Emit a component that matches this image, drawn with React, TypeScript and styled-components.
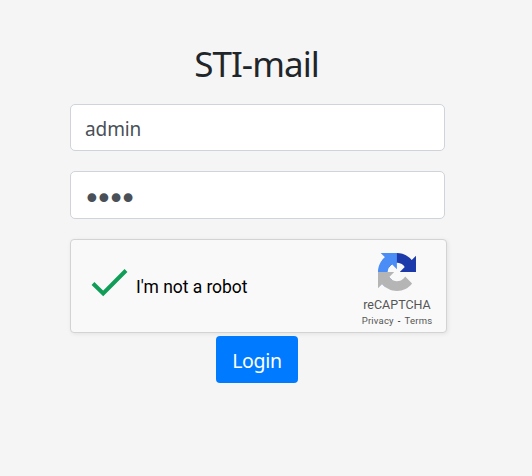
import React from "react";
import styled, { createGlobalStyle } from "styled-components";

const GlobalStyle = createGlobalStyle`
  * { box-sizing: border-box; }
  body {
    margin: 0;
    background: #f5f5f5;
    font-family: "Noto Sans", "Open Sans", sans-serif;
    color: #212529;
  }
`;

const Form = styled.form`
  display: flex;
  flex-direction: column;
  width: 377px;
  margin-left: 70px;
  padding-top: 41px;
`;

const Title = styled.h1`
  width: 373px;
  height: 46px;
  margin: 0 0 17px;
  text-align: center;
  font-size: 35px;
  line-height: 46px;
  font-weight: 400;
  letter-spacing: -0.95px;
`;

const Field = styled.input<{ $height: number }>`
  width: 375px;
  height: ${(p) => p.$height}px;
  margin: 0 0 20px;
  padding: 2px 14px 0;
  border: 1px solid #ced4da;
  border-radius: 5px;
  background: #fff;
  color: #495057;
  outline: none;
  font-family: inherit;
  font-size: 19px;
  letter-spacing: -0.1px;
`;

const PasswordField = styled(Field)`
  padding: 6px 12px 0;
  font-family: "DejaVu Sans", sans-serif;
  font-size: 30px;
  letter-spacing: -5.6px;
`;

const Captcha = styled.div`
  display: flex;
  align-items: center;
  width: 377px;
  height: 94px;
  border: 1px solid #d3d3d3;
  border-radius: 4px;
  background: #f9f9f9;
  box-shadow: 1px 1px 4px rgba(0, 0, 0, 0.08);
  font-family: Roboto, sans-serif;
`;

const CheckMark = styled.svg`
  width: 38px;
  height: 30px;
  margin: -9px 0 0 20px;
`;

const CaptchaLabel = styled.span`
  flex: 1;
  margin: 2px 0 0 7px;
  color: #000;
  font-size: 17.5px;
  letter-spacing: -0.05px;
`;

const Brand = styled.div`
  display: flex;
  flex-direction: column;
  align-items: center;
  align-self: flex-start;
  width: 80px;
  margin: 13px 9px 0 0;
  color: #555;
`;

const Logo = styled.svg`
  width: 38px;
  height: 38px;
`;

const BrandName = styled.span`
  margin-top: 6px;
  font-size: 12.5px;
  line-height: 16px;
`;

const Links = styled.span`
  display: flex;
  gap: 4px;
  margin-top: 2px;
  font-size: 9.5px;
  line-height: 12px;
  letter-spacing: 0.2px;
  white-space: nowrap;
`;

const Dash = styled.span`
  color: #000;
`;

const LoginButton = styled.button`
  align-self: flex-start;
  width: 82px;
  height: 47px;
  margin: 3px 0 0 146px;
  padding: 2px 0 0;
  border: 0;
  border-radius: 4px;
  background: #007bff;
  color: #fff;
  font-family: inherit;
  font-size: 19.5px;
  letter-spacing: -0.3px;
`;

export default function App() {
  return (
    <>
      <GlobalStyle />
      <Form onSubmit={(e) => e.preventDefault()}>
        <Title>STI-mail</Title>
        <Field $height={47} type="text" defaultValue="admin" aria-label="Username" />
        <PasswordField $height={48} type="password" defaultValue="pass" aria-label="Password" />
        <Captcha>
          <CheckMark viewBox="0 0 38 30" aria-hidden="true">
            <path d="M2 16.5 12.2 26.5 35 3.5" fill="none" stroke="#0f9d58" strokeWidth="4" />
          </CheckMark>
          <CaptchaLabel>I'm not a robot</CaptchaLabel>
          <Brand>
            <Logo viewBox="0 0 64 64" aria-hidden="true">
              <path fill="#1c3aa9" d="M64 31.955l-.033-1.37V4.687l-7.16 7.16C50.948 4.674 42.033.093 32.05.093c-10.4 0-19.622 4.96-25.458 12.64l11.736 11.86a15.55 15.55 0 0 1 4.754-5.334c2.05-1.6 4.952-2.906 8.968-2.906.485 0 .86.057 1.135.163 4.976.393 9.288 3.14 11.828 7.124l-8.307 8.307L64 31.953" />
              <path fill="#4a8df6" d="M31.862.094l-1.37.033H4.594l7.16 7.16C4.58 13.147 0 22.06 0 32.046c0 10.4 4.96 19.622 12.64 25.458L24.5 45.768a15.55 15.55 0 0 1-5.334-4.754c-1.6-2.05-2.906-4.952-2.906-8.968 0-.485.057-.86.163-1.135.393-4.976 3.14-9.288 7.124-11.828l8.307 8.307L31.86.095" />
              <path fill="#b5b5b5" d="M.001 32.045l.033 1.37v25.898l7.16-7.16c5.86 7.173 14.774 11.754 24.76 11.754 10.4 0 19.622-4.96 25.458-12.64l-11.736-11.86a15.55 15.55 0 0 1-4.754 5.334c-2.05 1.6-4.952 2.906-8.968 2.906-.485 0-.86-.057-1.135-.163-4.976-.393-9.288-3.14-11.828-7.124l8.307-8.307c-10.522.04-22.4.066-27.295-.005" />
            </Logo>
            <BrandName>reCAPTCHA</BrandName>
            <Links>
              <span>Privacy</span>
              <Dash>-</Dash>
              <span>Terms</span>
            </Links>
          </Brand>
        </Captcha>
        <LoginButton type="submit">Login</LoginButton>
      </Form>
    </>
  );
}
